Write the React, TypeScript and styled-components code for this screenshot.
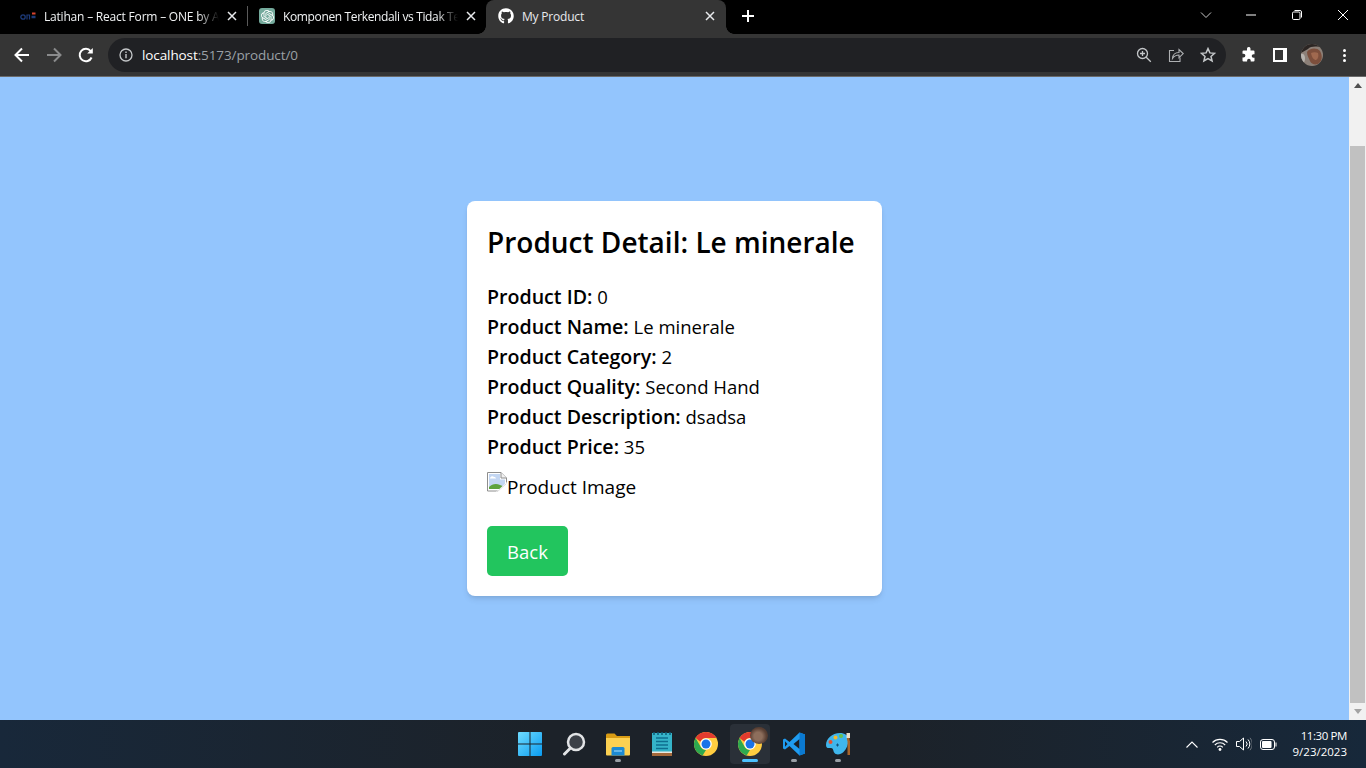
import styled, { createGlobalStyle } from "styled-components";
import { FaGithub } from "react-icons/fa";
import { SiOpenai } from "react-icons/si";

const GlobalStyle = createGlobalStyle`
  html, body { margin: 0; padding: 0; height: 100%; overflow: hidden; }
  #root { height: 100%; }
  * { box-sizing: border-box; }
`;

const App = () => {
    return (
        <>
            <GlobalStyle />
            <Screen>
                <TabStrip>
                    <Tab $width={239}>
                        <OneLogo />
                        <TabTitle>Latihan – React Form – ONE by A</TabTitle>
                        <CloseIcon />
                    </Tab>
                    <TabDivider />
                    <Tab $width={238}>
                        <GptBadge>
                            <SiOpenai size={13} color="#fff" />
                        </GptBadge>
                        <TabTitle $tight>Komponen Terkendali vs Tidak Te</TabTitle>
                        <CloseIcon />
                    </Tab>
                    <Tab $width={240} $active>
                        <FaGithub size={16} color="#fff" />
                        <TabTitle $active>My Product</TabTitle>
                        <CloseIcon />
                    </Tab>
                    <NewTab>
                        <svg width="14" height="14" viewBox="0 0 14 14">
                            <path d="M7 1v12M1 7h12" stroke="#fff" strokeWidth="2" />
                        </svg>
                    </NewTab>
                    <WindowControls>
                        <WindowButton $width={45}>
                            <svg width="12" height="8" viewBox="0 0 12 8" fill="none">
                                <path d="M1 1.5l5 5 5-5" stroke="#c8c8c8" />
                            </svg>
                        </WindowButton>
                        <WindowButton $width={46}>
                            <svg width="12" height="2" viewBox="0 0 12 2">
                                <path d="M1 1h10" stroke="#fff" />
                            </svg>
                        </WindowButton>
                        <WindowButton $width={46}>
                            <svg width="12" height="12" viewBox="0 0 12 12" fill="none">
                                <rect x="1.5" y="3" width="7.5" height="7.5" rx="1.2" stroke="#fff" />
                                <path d="M3.5 1.5h5.5a1.5 1.5 0 0 1 1.5 1.5v5.5" stroke="#fff" />
                            </svg>
                        </WindowButton>
                        <WindowButton $width={46}>
                            <svg width="12" height="12" viewBox="0 0 12 12">
                                <path d="M1 1l10 10M11 1L1 11" stroke="#fff" />
                            </svg>
                        </WindowButton>
                    </WindowControls>
                </TabStrip>

                <Toolbar>
                    <NavButtons>
                        <NavButton>
                            <svg width="18" height="18" viewBox="0 0 18 18" fill="none">
                                <path d="M16 9H3M9 2.5L2.5 9 9 15.5" stroke="#fff" strokeWidth="2" />
                            </svg>
                        </NavButton>
                        <NavButton>
                            <svg width="18" height="18" viewBox="0 0 18 18" fill="none">
                                <path d="M2 9h13M9 2.5L15.5 9 9 15.5" stroke="#8a8b8c" strokeWidth="2" />
                            </svg>
                        </NavButton>
                        <NavButton>
                            <svg width="18" height="18" viewBox="0 0 18 18" fill="none">
                                <path d="M14.6 11.5a6.2 6.2 0 1 1-.9-6.4" stroke="#fff" strokeWidth="2" />
                                <path d="M15.8 2v5.6h-5.6z" fill="#fff" />
                            </svg>
                        </NavButton>
                    </NavButtons>
                    <Omnibox>
                        <svg width="14" height="14" viewBox="0 0 14 14" fill="none">
                            <circle cx="7" cy="7" r="6" stroke="#c4c7c9" strokeWidth="1.3" />
                            <path d="M7 6v4.2M7 3.6v1.3" stroke="#c4c7c9" strokeWidth="1.4" />
                        </svg>
                        <Url>
                            <UrlHost>localhost</UrlHost>:5173/product/0
                        </Url>
                        <OmniActions>
                            <svg width="16" height="16" viewBox="0 0 16 16" fill="none">
                                <circle cx="6.5" cy="6.5" r="5" stroke="#c4c7c9" strokeWidth="1.3" />
                                <path d="M10.2 10.2l4.6 4.6M6.5 4v5M4 6.5h5" stroke="#c4c7c9" strokeWidth="1.3" />
                            </svg>
                            <svg width="16" height="16" viewBox="0 0 16 16" fill="none">
                                <path d="M6 3.5H1.5v11h10.5v-4" stroke="#aeb0b2" strokeWidth="1.1" />
                                <path d="M4.5 11.5c.3-4 3-6 6.5-6V2.6l4.2 4-4.2 4V8c-2.800 0-4.800 1-6.500 3.500z" stroke="#aeb0b2" strokeWidth="1.1" />
                            </svg>
                            <svg width="16" height="16" viewBox="0 0 16 16" fill="none">
                                <path d="M8 1.600l1.900 4.300 4.700.4-3.600 3.100 1.100 4.600L8 11.600 3.900 14l1.100-4.600-3.600-3.100 4.700-.4z" stroke="#c4c7c9" strokeWidth="1.5" />
                            </svg>
                        </OmniActions>
                    </Omnibox>
                    <ToolbarActions>
                        <PuzzleIcon width="16" height="16" viewBox="0 0 16 16">
                            <path d="M6 1.500a1.800 1.800 0 0 1 3.500 0V3.500h3a1 1 0 0 1 1 1v2.700h-1a1.800 1.800 0 0 0 0 3.600h1v2.700a1 1 0 0 1-1 1H9.700v-1a1.800 1.800 0 0 0-3.600 0v1H2.500a1 1 0 0 1-1-1v-3h1a1.900 1.900 0 0 0 0-3.800h-1V4.500a1 1 0 0 1 1-1H6z" fill="#fff" />
                        </PuzzleIcon>
                        <SidePanelIcon />
                        <svg width="22" height="22" viewBox="0 0 22 22">
                            <defs>
                                <clipPath id="face">
                                    <circle cx="11" cy="11" r="11" />
                                </clipPath>
                            </defs>
                            <g clipPath="url(#face)">
                                <rect width="22" height="22" fill="#8c8078" />
                                <path d="M0 0h22v4c-6-2-12-2-15 1L0 9z" fill="#2b2523" />
                                <path d="M6 8c2-4 10-5 13-1 3 5 2 11-2 13-3 1-7 0-8-3-1-3-3-5-3-9z" fill="#7d4f3c" />
                                <path d="M10 9c2-1 5-1 7 0 1 3 0 6-2 7-2 0-4-2-5-7z" fill="#a0694f" />
                                <path d="M0 10c2-1 4 1 4 4s-1 6-4 6z" fill="#b7b3ae" />
                            </g>
                        </svg>
                        <KebabIcon>
                            <KebabDot />
                            <KebabDot />
                            <KebabDot />
                        </KebabIcon>
                    </ToolbarActions>
                </Toolbar>

                <Viewport>
                    <Page>
                        <Card>
                            <Title>Product Detail: Le minerale</Title>
                            <Details>
                                <Row><b>Product ID:</b> 0</Row>
                                <Row><b>Product Name:</b> Le minerale</Row>
                                <Row><b>Product Category:</b> 2</Row>
                                <Row><b>Product Quality:</b> Second Hand</Row>
                                <Row><b>Product Description:</b> dsadsa</Row>
                                <Row><b>Product Price:</b> 35</Row>
                            </Details>
                            <BrokenImage>
                                <svg width="20" height="20" viewBox="0 0 20 20">
                                    <path d="M.5.500h13.500l5.500 5.500v13H.5z" fill="#fff" stroke="#8e8e8e" />
                                    <path d="M14 .5V6h5.500" fill="#f2f2f2" stroke="#8e8e8e" />
                                    <path d="M2 2h11v5.500h5V17H2z" fill="#c3d6f2" />
                                    <path d="M2 17v-2c3-3 7-4 11-2l5 2v2z" fill="#5fa33c" />
                                    <path d="M3 6c1-2 3-2 4-1 1 0 2 .500 2 1.500H3z" fill="#fff" />
                                    <path d="M20 10L9 20h11z" fill="#fff" />
                                    <path d="M19.500 11.500L10 20" stroke="#dcdcdc" />
                                </svg>
                                <span>Product Image</span>
                            </BrokenImage>
                            <BackButton>Back</BackButton>
                        </Card>
                    </Page>
                    <Scrollbar>
                        <ScrollArrow>
                            <svg width="8" height="5" viewBox="0 0 8 5"><path d="M0 5l4-5 4 5z" fill="#505050" /></svg>
                        </ScrollArrow>
                        <ScrollThumb />
                        <ScrollArrow>
                            <svg width="8" height="5" viewBox="0 0 8 5"><path d="M0 0l4 5 4-5z" fill="#a3a3a3" /></svg>
                        </ScrollArrow>
                    </Scrollbar>
                </Viewport>

                <Taskbar>
                    <span />
                    <TaskIcons>
                        <TaskIcon>
                            <svg width="24" height="24" viewBox="0 0 24 24">
                                <defs>
                                    <linearGradient id="win" x1="0" y1="0" x2="1" y2="1">
                                        <stop offset="0" stopColor="#6fdcff" />
                                        <stop offset="1" stopColor="#0a9bf0" />
                                    </linearGradient>
                                </defs>
                                <path d="M0 1a1 1 0 0 1 1-1h10.500v11.500H0zM12.500 0H23a1 1 0 0 1 1 1v10.500H12.500zM0 12.500h11.500V24H1a1 1 0 0 1-1-1zM12.500 12.500H24V23a1 1 0 0 1-1 1H12.500z" fill="url(#win)" />
                            </svg>
                        </TaskIcon>
                        <TaskIcon>
                            <svg width="24" height="24" viewBox="0 0 24 24" fill="none">
                                <circle cx="14" cy="10" r="8" fill="#3c4148" stroke="#e2e4e6" strokeWidth="2.500" />
                                <path d="M8 16.500L2.500 22" stroke="#e2e4e6" strokeWidth="3" strokeLinecap="round" />
                            </svg>
                        </TaskIcon>
                        <TaskIcon $dot>
                            <svg width="24" height="23" viewBox="0 0 24 23">
                                <path d="M0 2a1.500 1.500 0 0 1 1.500-1.500h7L11 3h13v5H0z" fill="#d99c14" />
                                <path d="M0 5h24v16.500a1 1 0 0 1-1 1H1a1 1 0 0 1-1-1z" fill="#fcd152" />
                                <path d="M5.500 15.500A1.500 1.500 0 0 1 7 14h10a1.500 1.500 0 0 1 1.500 1.500v7h-13z" fill="#1c8ad2" />
                                <path d="M8 18h8" stroke="#7cc4ef" strokeWidth="1.500" />
                            </svg>
                        </TaskIcon>
                        <TaskIcon>
                            <svg width="20" height="24" viewBox="0 0 20 24">
                                <rect x="0" y="1" width="20" height="23" fill="#35b4c9" />
                                <rect x="0" y="21" width="20" height="3" fill="#a4683a" />
                                <rect x="0" y="19.500" width="20" height="1.500" fill="#e9e9e2" />
                                <path d="M4 6h12M4 9.500h12M4 13h12M4 16.500h12" stroke="#0e6f90" strokeWidth="1.700" />
                                <path d="M2 0v3M6 0v3M10 0v3M14 0v3M18 0v3" stroke="#0c5d7a" strokeWidth="1.500" />
                            </svg>
                        </TaskIcon>
                        <TaskIcon>
                            <ChromeLogo />
                        </TaskIcon>
                        <TaskIcon $active>
                            <ChromeLogo />
                            <TaskBadge />
                        </TaskIcon>
                        <TaskIcon $dot>
                            <svg width="24" height="24" viewBox="0 0 24 24">
                                <path d="M17.500.500L7.500 10 3 6.500 1 7.500v9l2 1 4.500-3.500 10 9.500L23 21.500V2.500z" fill="#1f9cf0" />
                                <path d="M17.500 7l-6 5 6 5z" fill="#1b2027" />
                                <path d="M3 9.200L5.500 12 3 14.800z" fill="#1b2027" />
                                <path d="M17.500.500L23 2.500v19l-5.500 2z" fill="#0b7ad1" />
                            </svg>
                        </TaskIcon>
                        <TaskIcon $dot>
                            <svg width="24" height="24" viewBox="0 0 24 24">
                                <path d="M14 1C6 1 0 7 0 13c0 4 3 3 5 3 2.500 0 2 3 3.500 5 2 2.500 6.500 1.500 9-1 3-3 5-8 5-12 0-5-4-7-8.500-7z" fill="#3fb6ec" />
                                <circle cx="4.500" cy="10" r="2" fill="#e8502f" />
                                <circle cx="9.500" cy="5.500" r="2" fill="#f4b92c" />
                                <circle cx="15" cy="4" r="2" fill="#6cc04a" />
                                <path d="M21 3h2.500v5l.5 1v14h-2.500V9l-.5-1z" fill="#a5642b" />
                                <path d="M20.500 1h3.500v5h-3.500z" fill="#eadfc8" />
                                <path d="M10 13h3M11.500 11.500v3" stroke="#14507a" strokeWidth="1" />
                            </svg>
                        </TaskIcon>
                    </TaskIcons>
                    <Tray>
                        <svg width="12" height="7" viewBox="0 0 12 7" fill="none">
                            <path d="M.5 6.500L6 1l5.500 5.500" stroke="#fff" strokeWidth="1.100" />
                        </svg>
                        <TrayGroup>
                            <svg width="16" height="13" viewBox="0 0 16 13" fill="none">
                                <path d="M.5 4.500a10.500 10.500 0 0 1 15 0M2.800 7a7.200 7.200 0 0 1 10.400 0M5.200 9.300a3.800 3.800 0 0 1 5.600 0" stroke="#fff" strokeWidth="1.100" />
                                <circle cx="8" cy="11.500" r="1.400" fill="#fff" />
                            </svg>
                            <svg width="16" height="14" viewBox="0 0 16 14" fill="none">
                                <path d="M.5 4.500h3L7.500 1v12L3.500 9.500h-3z" stroke="#fff" />
                                <path d="M10 4.500a3.500 3.500 0 0 1 0 5M12 2.500a6.500 6.500 0 0 1 0 9" stroke="#fff" />
                                <path d="M14 .8a9.500 9.500 0 0 1 0 12.400" stroke="#6d747c" />
                            </svg>
                            <svg width="17" height="11" viewBox="0 0 17 11" fill="none">
                                <rect x=".5" y=".5" width="14" height="10" rx="2.500" stroke="#fff" />
                                <rect x="2" y="2" width="9.500" height="7" rx="1" fill="#fff" />
                                <path d="M15.500 3.500h1v4h-1z" fill="#fff" />
                            </svg>
                        </TrayGroup>
                        <Clock>
                            <ClockTime>11:30 PM</ClockTime>
                            <span>9/23/2023</span>
                        </Clock>
                    </Tray>
                </Taskbar>
            </Screen>
        </>
    );
};

export default App;

const CloseIcon = () => (
    <CloseSvg width="10" height="10" viewBox="0 0 10 10">
        <path d="M1 1l8 8M9 1L1 9" stroke="#e8eaed" strokeWidth="1.500" />
    </CloseSvg>
);

const OneLogo = () => (
    <svg width="16" height="10" viewBox="0 0 16 10" fill="none">
        <circle cx="3" cy="6" r="2.200" stroke="#1d3a78" strokeWidth="1.300" />
        <path d="M7 8.500V4h2.500v4.500" stroke="#1d3a78" strokeWidth="1.200" />
        <path d="M11.500 6h4" stroke="#1d3a78" strokeWidth="2.500" />
        <path d="M12 2.500h3.500" stroke="#d8432e" strokeWidth="2" />
    </svg>
);

const ChromeLogo = () => (
    <svg width="24" height="24" viewBox="0 0 24 24">
        <circle cx="12" cy="12" r="12" fill="#ffcd40" />
        <path d="M12 0a12 12 0 0 1 10.400 6H12a6 6 0 0 0-5.600 3.800L1.600 6A12 12 0 0 1 12 0z" fill="#e33b2e" />
        <path d="M1.600 6l5.200 9A6 6 0 0 0 12 18l-3.400 5.500A12 12 0 0 1 1.600 6z" fill="#2da94f" />
        <circle cx="12" cy="12" r="5.800" fill="#fff" />
        <circle cx="12" cy="12" r="4.500" fill="#1a73e8" />
    </svg>
);

const Screen = styled.div`
    display: flex;
    flex-direction: column;
    width: 1366px;
    height: 768px;
    overflow: hidden;
    font-family: "Open Sans", "Noto Sans", sans-serif;
`;

const TabStrip = styled.div`
    display: flex;
    align-items: stretch;
    height: 34px;
    padding-left: 8px;
    background: #000;
`;

const Tab = styled.div<{ $width: number; $active?: boolean }>`
    position: relative;
    display: flex;
    align-items: center;
    gap: 8px;
    width: ${(p) => p.$width}px;
    padding: 0 ${(p) => (p.$active ? 11 : 10)}px 2px 12px;
    border-radius: 8px 8px 0 0;
    background: ${(p) => (p.$active ? "#353535" : "transparent")};
    &::before,
    &::after {
        content: "";
        display: ${(p) => (p.$active ? "block" : "none")};
        position: absolute;
        bottom: 0;
        width: 8px;
        height: 8px;
    }
    &::before {
        left: -8px;
        background: radial-gradient(circle at 0 0, transparent 7.500px, #353535 8px);
    }
    &::after {
        right: -8px;
        background: radial-gradient(circle at 100% 0, transparent 7.500px, #353535 8px);
    }
`;

const TabDivider = styled.div`
    align-self: center;
    width: 1px;
    height: 20px;
    margin-bottom: 2px;
    background: #5a5a5a;
`;

const TabTitle = styled.span<{ $active?: boolean; $tight?: boolean }>`
    flex: 1;
    min-width: 0;
    white-space: nowrap;
    font-family: "Open Sans", sans-serif;
    font-size: 12px;
    letter-spacing: ${(p) => (p.$tight ? "-0.36px" : "-0.2px")};
    color: ${(p) => (p.$active ? "#e8eaed" : "#f1f3f4")};
    mask-image: ${(p) => (p.$active ? "none" : "linear-gradient(to right, #000 88%, transparent)")};
`;

const CloseSvg = styled.svg`
    flex: none;
`;

const GptBadge = styled.div`
    display: flex;
    align-items: center;
    justify-content: center;
    flex: none;
    width: 16px;
    height: 16px;
    margin-left: -1px;
    border-radius: 3px;
    background: #74aa9c;
`;

const NewTab = styled.div`
    display: flex;
    align-items: center;
    justify-content: center;
    width: 44px;
    padding-bottom: 2px;
`;

const WindowControls = styled.div`
    display: flex;
    margin-left: auto;
`;

const WindowButton = styled.div<{ $width: number }>`
    display: flex;
    align-items: center;
    justify-content: center;
    width: ${(p) => p.$width}px;
    padding-bottom: 4px;
`;

const Toolbar = styled.div`
    display: flex;
    align-items: center;
    height: 43px;
    padding: 4px 0 4px 6px;
    background: #353535;
    border-bottom: 1px solid #6a6a6a;
`;

const NavButtons = styled.div`
    display: flex;
    width: 102px;
`;

const NavButton = styled.div`
    display: flex;
    align-items: center;
    justify-content: center;
    width: 32px;
`;

const Omnibox = styled.div`
    display: flex;
    align-items: center;
    gap: 9px;
    width: 1118px;
    height: 34px;
    padding: 0 10px 0 11px;
    border-radius: 17px;
    background: #202124;
`;

const Url = styled.span`
    flex: 1;
    font-size: 13.500px;
    letter-spacing: -0.1px;
    color: #9aa0a6;
`;

const UrlHost = styled.span`
    color: #fff;
`;

const OmniActions = styled.div`
    display: flex;
    align-items: center;
    gap: 16px;
`;

const ToolbarActions = styled.div`
    display: flex;
    align-items: center;
    gap: 14px;
    padding-left: 15px;
`;

const PuzzleIcon = styled.svg`
    margin-right: 2px;
`;

const SidePanelIcon = styled.div`
    width: 14px;
    height: 14px;
    border: 2px solid #fff;
    border-right-width: 4px;
    background: #353535;
`;

const KebabIcon = styled.div`
    display: flex;
    flex-direction: column;
    gap: 2px;
    margin-left: 6px;
`;

const KebabDot = styled.div`
    width: 3px;
    height: 3px;
    border-radius: 50%;
    background: #fff;
`;

const Viewport = styled.div`
    display: flex;
    flex: 1;
    min-height: 0;
`;

const Page = styled.main`
    display: flex;
    flex: 1;
    align-items: center;
    justify-content: center;
    background: #93c5fd;
`;

const Card = styled.div`
    width: 415px;
    padding: 20px;
    border-radius: 8px;
    background: #fff;
    color: #000;
    box-shadow: 0 4px 6px -1px rgba(0, 0, 0, 0.1), 0 2px 4px -2px rgba(0, 0, 0, 0.1);
`;

const Title = styled.h1`
    margin: 0 0 17px;
    font-size: 28px;
    font-weight: 600;
    line-height: 43px;
    padding-bottom: 1px;
    white-space: nowrap;
`;

const Details = styled.div`
    display: flex;
    flex-direction: column;
`;

const Row = styled.div`
    font-size: 18.500px;
    line-height: 30px;
    b {
        font-size: 19.600px;
        font-weight: 600;
    }
`;

const BrokenImage = styled.div`
    display: flex;
    align-items: flex-start;
    height: 30px;
    margin: 10px 0 24px;
    font-size: 19px;
    line-height: 30px;
    svg {
        flex: none;
    }
`;

const BackButton = styled.button`
    display: block;
    width: 81px;
    height: 50px;
    padding: 1px 0 0;
    border: none;
    border-radius: 5px;
    background: #22c55e;
    color: #fff;
    font-family: inherit;
    font-size: 18.500px;
`;

const Scrollbar = styled.div`
    display: flex;
    flex-direction: column;
    width: 17px;
    background: #f1f1f1;
`;

const ScrollArrow = styled.div`
    display: flex;
    flex: none;
    align-items: center;
    justify-content: center;
    height: 17px;
`;

const ScrollThumb = styled.div`
    flex: 1;
    margin: 52px 1px 0;
    background: #c1c1c1;
`;

const Taskbar = styled.footer`
    display: grid;
    grid-template-columns: 1fr auto 1fr;
    align-items: center;
    height: 48px;
    background: linear-gradient(to right, #18283a, #1c2229 40%, #1c2229 65%, #17283a);
`;

const TaskIcons = styled.div`
    display: flex;
    padding-left: 2px;
`;

const TaskIcon = styled.div<{ $active?: boolean; $dot?: boolean }>`
    position: relative;
    display: flex;
    align-items: center;
    justify-content: center;
    width: 40px;
    height: 40px;
    margin: 0 2px;
    border-radius: 4px;
    background: ${(p) => (p.$active ? "#2a3038" : "transparent")};
    &::after {
        content: "";
        display: ${(p) => (p.$active || p.$dot ? "block" : "none")};
        position: absolute;
        bottom: 2px;
        left: 50%;
        width: ${(p) => (p.$active ? 16 : 6)}px;
        height: 3px;
        margin-left: ${(p) => (p.$active ? -8 : -3)}px;
        border-radius: 2px;
        background: ${(p) => (p.$active ? "#4cc2ff" : "#9aa0a6")};
    }
`;

const TaskBadge = styled.div`
    position: absolute;
    top: 3px;
    right: 2px;
    width: 18px;
    height: 17px;
    border-radius: 50%;
    background: radial-gradient(circle at 45% 55%, #8d6e5c 0 30%, #5a4034 60%, #3a2a23);
`;

const Tray = styled.div`
    display: flex;
    align-items: center;
    justify-content: flex-end;
    padding-right: 19px;
`;

const TrayGroup = styled.div`
    display: flex;
    align-items: center;
    gap: 8px;
    margin: 0 16px 0 14px;
`;

const Clock = styled.div`
    display: flex;
    flex-direction: column;
    align-items: flex-end;
    font-size: 11.500px;
    line-height: 16px;
    color: #fff;
`;

const ClockTime = styled.span`
    letter-spacing: -0.4px;
`;
